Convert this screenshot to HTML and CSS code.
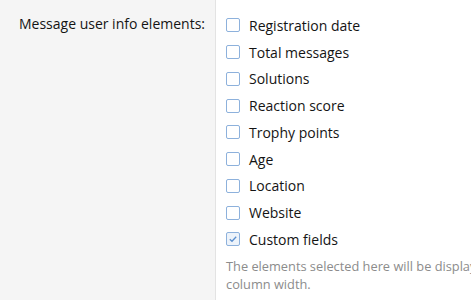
FILE: index.html
```html
<!DOCTYPE html>
<html lang="en">
<head>
    <meta charset="UTF-8">
    <title>Options</title>
    <link rel="stylesheet" href="styles.css">
</head>
<body>
    <div class="form-row">
        <div class="form-label">Message user info elements:</div>
        <div class="form-input">
            <ul class="check-list">
                <li><span class="box"></span>Registration date</li>
                <li><span class="box"></span>Total messages</li>
                <li><span class="box"></span>Solutions</li>
                <li><span class="box"></span>Reaction score</li>
                <li><span class="box"></span>Trophy points</li>
                <li><span class="box"></span>Age</li>
                <li><span class="box"></span>Location</li>
                <li><span class="box"></span>Website</li>
                <li><span class="box checked"><svg viewBox="0 0 12 12" width="12" height="12"><path d="M2.8 6.2 L5 8.3 L9.2 3.8" fill="none" stroke="#5b8fce" stroke-width="1.3"/></svg></span>Custom fields</li>
            </ul>
            <div class="hint">The elements selected here will be displayed in the message user info block, depending on column width.</div>
        </div>
    </div>
</body>
</html>
```

FILE: styles.css
```css
body {
    margin: 0;
    font-family: 'Open Sans', sans-serif;
    font-size: 14px;
    color: #141414;
    background: #fff;
    overflow: hidden;
}
.form-row {
    display: flex;
    height: 300px;
}
.form-label {
    width: 205px;
    flex-shrink: 0;
    padding: 14px 10px 0 0;
    text-align: right;
    background: #f5f5f5;
    border-right: 1px solid #e3e3e3;
    white-space: nowrap;
}
.form-input {
    padding: 12px 0 0 10px;
    width: 720px;
    flex-shrink: 0;
}
.check-list {
    list-style: none;
    margin: 0;
    padding: 0;
}
.check-list li {
    display: flex;
    align-items: center;
    height: 26.75px;
}
.box {
    width: 12px;
    height: 12px;
    border: 1px solid #8db1dc;
    border-radius: 2px;
    background: #fff;
    margin-right: 9px;
    display: flex;
    align-items: center;
    justify-content: center;
}
.box.checked {
    background: #edf3fa;
}
.hint {
    margin-top: 4px;
    font-size: 12.8px;
    line-height: 18px;
    color: #8c8c8c;
    width: 560px;
}
```
